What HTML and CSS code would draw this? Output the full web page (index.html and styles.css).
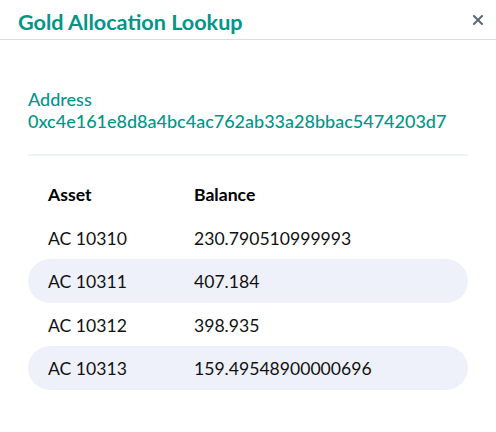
FILE: index.html
```html
<!DOCTYPE html>
<html>
<head>
<meta charset="utf-8">
<link rel="stylesheet" href="styles.css">
</head>
<body>
<div class="dialog">
  <header class="dialog-header">
    <h1 class="title">Gold Allocation Lookup</h1>
    <button class="close" aria-label="Close">
      <svg width="10" height="10" viewBox="0 0 10 10"><path d="M1 1L9 9M9 1L1 9" stroke="#5a6878" stroke-width="2" stroke-linecap="square" fill="none"/></svg>
    </button>
  </header>
  <section class="body">
    <div class="address">
      <div class="label">Address</div>
      <div class="value">0xc4e161e8d8a4bc4ac762ab33a28bbac5474203d7</div>
    </div>
    <div class="divider"></div>
    <div class="table">
      <div class="row head"><span>Asset</span><span>Balance</span></div>
      <div class="row"><span>AC 10310</span><span>230.790510999993</span></div>
      <div class="row alt"><span>AC 10311</span><span>407.184</span></div>
      <div class="row"><span>AC 10312</span><span>398.935</span></div>
      <div class="row alt"><span>AC 10313</span><span>159.49548900000696</span></div>
    </div>
  </section>
</div>
</body>
</html>
```

FILE: styles.css
```css
* { box-sizing: border-box; }
html, body { margin: 0; padding: 0; background: #fff; }
body { font-family: Lato, "Open Sans", sans-serif; width: 496px; height: 432px; overflow: hidden; }

.dialog-header {
  display: flex;
  justify-content: space-between;
  align-items: flex-start;
  height: 40px;
  padding: 10.4px 13px 0 18px;
  border-bottom: 1px solid #dcdcdc;
}
.title {
  margin: 0;
  font-size: 21.6px;
  font-weight: 700;
  color: #009688;
  line-height: 1.2;
}
.close {
  border: 0;
  background: none;
  padding: 0;
  margin-top: 4.6px;
  width: 10px;
  height: 10px;
  display: flex;
}

.body { padding: 47.7px 28px 0 28px; }
.address { color: #009688; font-size: 18px; line-height: 22px; font-weight: 500; }
.divider { height: 2px; background: #eef0fa; margin-top: 22.3px; }

.table { margin-top: 16.5px; }
.row {
  display: grid;
  grid-template-columns: 146px 1fr;
  align-items: center;
  height: 43.5px;
  padding: 0.6px 20px 0 20px;
  font-size: 17.6px;
  color: #111;
  border-radius: 22px;
}
.row.head { font-weight: 700; color: #000; }
.row.alt { background: #eff1fa; }
```
